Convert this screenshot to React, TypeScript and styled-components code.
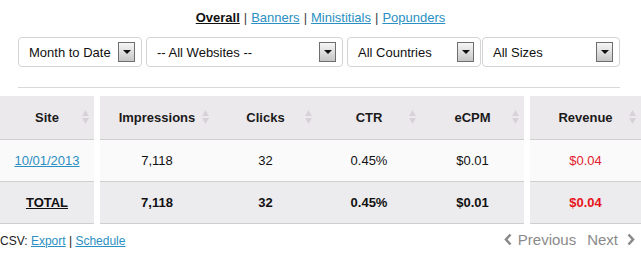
import React from "react";
import styled, { createGlobalStyle } from "styled-components";

const Global = createGlobalStyle`
  html, body { margin: 0; padding: 0; background: #fff; }
  body {
    font-family: "Liberation Sans", Arial, sans-serif;
    font-size: 13px;
    color: #222;
    width: 641px;
    overflow: hidden;
  }
`;

const Page = styled.div`
  width: 641px;
`;

const Tabs = styled.nav`
  padding-top: 10px;
  text-align: center;
  font-size: 13px;
  line-height: 15px;
  color: #333;
`;

const TabLink = styled.a<{ $active?: boolean }>`
  color: ${(p) => (p.$active ? "#111" : "#2a8fc2")};
  font-weight: ${(p) => (p.$active ? "bold" : "normal")};
  text-decoration: underline;
  cursor: pointer;
`;

const Sep = styled.span`
  color: #444;
  margin: 0 4px;
`;

const Filters = styled.div`
  display: flex;
  padding-left: 18px;
  margin-top: 12px;
`;

const Select = styled.div<{ $w: number; $ml: number }>`
  box-sizing: border-box;
  width: ${(p) => p.$w}px;
  margin-left: ${(p) => p.$ml}px;
  height: 30px;
  border: 1px solid #d4d4d4;
  border-radius: 4px;
  display: flex;
  align-items: center;
  justify-content: space-between;
  padding: 0 6px 0 10px;
  font-size: 13px;
  color: #111;
  background: #fff;
`;

const Arrow = styled.span`
  box-sizing: border-box;
  width: 17px;
  height: 20px;
  border: 1px solid #6e6e6e;
  background: linear-gradient(#f6f6f6, #c6c6c6);
  display: flex;
  align-items: center;
  justify-content: center;
  &::after {
    content: "";
    width: 0;
    height: 0;
    border-left: 4px solid transparent;
    border-right: 4px solid transparent;
    border-top: 4px solid #111;
  }
`;

const Rule = styled.hr`
  margin: 20px 0 0 18px;
  width: 602px;
  height: 0;
  border: none;
  border-top: 1px solid #d8d8d8;
`;

const TableWrap = styled.div`
  display: flex;
  gap: 6px;
  margin-top: 8px;
`;

const Table = styled.table<{ $w: number }>`
  width: ${(p) => p.$w}px;
  border-collapse: collapse;
  table-layout: fixed;
  flex: none;
`;

const Th = styled.th<{ $w?: number }>`
  position: relative;
  box-sizing: border-box;
  height: 43px;
  padding: 0;
  background: #ece9ed;
  border-bottom: 1px solid #cfcfcf;
  font-weight: bold;
  font-size: 13px;
  color: #1a1a1a;
  text-align: center;
  ${(p) => (p.$w ? `width: ${p.$w}px;` : "")}
`;

const SortIcon = styled.svg`
  position: absolute;
  right: 5px;
  top: 50%;
  margin-top: -7px;
`;

const Td = styled.td<{ $total?: boolean; $red?: boolean }>`
  box-sizing: border-box;
  height: 42px;
  padding: 0;
  text-align: center;
  background: ${(p) => (p.$total ? "#ecebed" : "#fafafa")};
  border-bottom: 1px solid #cfcfcf;
  font-weight: ${(p) => (p.$total ? "bold" : "normal")};
  color: ${(p) => (p.$red ? (p.$total ? "#e8121c" : "#e0202e") : "#111")};
  font-size: 13px;
`;

const CellLink = styled.a<{ $total?: boolean }>`
  color: ${(p) => (p.$total ? "#111" : "#2a8fc2")};
  text-decoration: underline;
`;

const Footer = styled.div`
  display: flex;
  justify-content: space-between;
  align-items: center;
  margin-top: 7px;
  padding-right: 6px;
`;

const Csv = styled.div`
  font-size: 12px;
  color: #222;
  padding-top: 3px;
`;

const Pager = styled.div`
  display: flex;
  align-items: center;
  gap: 11px;
  font-size: 15px;
  color: #8a8a8a;
`;

const PageBtn = styled.span<{ $gap: number }>`
  display: flex;
  align-items: center;
  gap: ${(p) => p.$gap}px;
`;

const Sort = () => (
  <SortIcon width="7" height="14" viewBox="0 0 7 14">
    <polygon points="3.5,0 7,6 0,6" fill="#d6d2d7" />
    <polygon points="0,8 7,8 3.5,14" fill="#d6d2d7" />
  </SortIcon>
);

const Chevron = ({ dir }: { dir: "l" | "r" }) => (
  <svg width="8" height="13" viewBox="0 0 8 13">
    <polyline
      points={dir === "l" ? "6.5,1.5 2,6.5 6.5,11.5" : "1.5,1.5 6,6.5 1.5,11.5"}
      fill="none"
      stroke="#8a8a8a"
      strokeWidth="2.6"
    />
  </svg>
);

const middleCols = [
  { h: "Impressions", w: 114, v: "7,118" },
  { h: "Clicks", w: 103, v: "32" },
  { h: "CTR", w: 104, v: "0.45%" },
  { h: "eCPM", w: 103, v: "$0.01" },
];

export default function App() {
  return (
    <Page>
      <Global />
      <Tabs>
        <TabLink $active>Overall</TabLink>
        <Sep>|</Sep>
        <TabLink>Banners</TabLink>
        <Sep>|</Sep>
        <TabLink>Ministitials</TabLink>
        <Sep>|</Sep>
        <TabLink>Popunders</TabLink>
      </Tabs>
      <Filters>
        <Select $w={124} $ml={0}>
          Month to Date <Arrow />
        </Select>
        <Select $w={197} $ml={4}>
          -- All Websites -- <Arrow />
        </Select>
        <Select $w={134} $ml={4}>
          All Countries <Arrow />
        </Select>
        <Select $w={138} $ml={1}>
          All Sizes <Arrow />
        </Select>
      </Filters>
      <Rule />
      <TableWrap>
        <Table $w={94}>
          <thead>
            <tr>
              <Th>
                Site
                <Sort />
              </Th>
            </tr>
          </thead>
          <tbody>
            <tr>
              <Td>
                <CellLink>10/01/2013</CellLink>
              </Td>
            </tr>
            <tr>
              <Td $total>
                <CellLink $total>TOTAL</CellLink>
              </Td>
            </tr>
          </tbody>
        </Table>
        <Table $w={424}>
          <thead>
            <tr>
              {middleCols.map((c) => (
                <Th key={c.h} $w={c.w}>
                  {c.h}
                  <Sort />
                </Th>
              ))}
            </tr>
          </thead>
          <tbody>
            <tr>
              {middleCols.map((c) => (
                <Td key={c.h}>{c.v}</Td>
              ))}
            </tr>
            <tr>
              {middleCols.map((c) => (
                <Td key={c.h} $total>
                  {c.v}
                </Td>
              ))}
            </tr>
          </tbody>
        </Table>
        <Table $w={111}>
          <thead>
            <tr>
              <Th>
                Revenue
                <Sort />
              </Th>
            </tr>
          </thead>
          <tbody>
            <tr>
              <Td $red>$0.04</Td>
            </tr>
            <tr>
              <Td $red $total>
                $0.04
              </Td>
            </tr>
          </tbody>
        </Table>
      </TableWrap>
      <Footer>
        <Csv>
          CSV: <CellLink>Export</CellLink> | <CellLink>Schedule</CellLink>
        </Csv>
        <Pager>
          <PageBtn $gap={6}>
            <Chevron dir="l" />
            Previous
          </PageBtn>
          <PageBtn $gap={9}>
            Next
            <Chevron dir="r" />
          </PageBtn>
        </Pager>
      </Footer>
    </Page>
  );
}
